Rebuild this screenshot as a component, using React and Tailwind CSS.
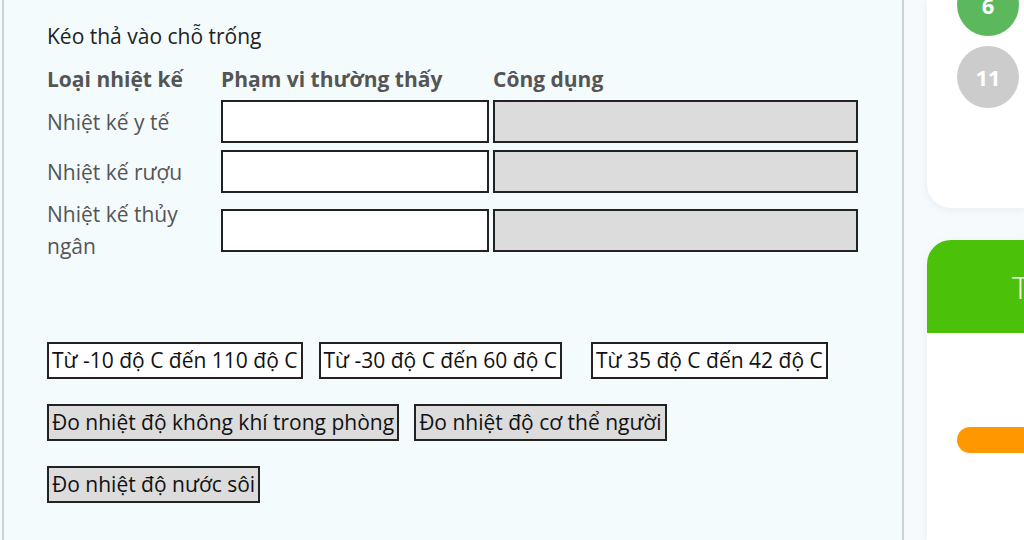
import React from "react";

const rows = [
  { label: "Nhiệt kế y tế", mt: "mt-[5px]" },
  { label: "Nhiệt kế rượu", mt: "mt-[7px]" },
  { label: "Nhiệt kế thủy ngân", mt: "mt-[5px]" },
];

const ranges = [
  { text: "Từ -10 độ C đến 110 độ C", cls: "" },
  { text: "Từ -30 độ C đến 60 độ C", cls: "ml-4" },
  { text: "Từ 35 độ C đến 42 độ C", cls: "ml-[29px]" },
];

const uses = [
  { text: "Đo nhiệt độ không khí trong phòng", cls: "" },
  { text: "Đo nhiệt độ cơ thể người", cls: "ml-[15px]" },
];

const Chip = ({ text, grey, className = "" }) => (
  <div
    className={`border-2 border-[#222] px-[3px] h-[37px] flex items-center text-[21px] text-[#111] whitespace-nowrap ${
      grey ? "bg-[#dcdcdc]" : "bg-white"
    } ${className}`}
  >
    {text}
  </div>
);

const App = () => {
  return (
    <div
      className="w-[1024px] h-[540px] overflow-hidden flex bg-[#f8fbfd] pl-[2px]"
      style={{ fontFamily: '"Open Sans", "Noto Sans", sans-serif' }}
    >
      {/* Main exercise panel */}
      <div className="w-[902px] shrink-0 h-full bg-[#f3fbfd] border-l-2 border-r-2 border-[#cbd3da] pl-[43px] pt-[20px]">
        <p className="text-[21px] leading-[32px] text-[#222]">Kéo thả vào chỗ trống</p>

        {/* Table */}
        <div className="grid grid-cols-[170px_268px_365px] gap-x-[4px] items-center mt-[11px]">
          <div className="text-[21px] leading-[32px] font-bold text-[#555] whitespace-nowrap">Loại nhiệt kế</div>
          <div className="text-[21px] leading-[32px] font-bold text-[#555]">Phạm vi thường thấy</div>
          <div className="text-[21px] leading-[32px] font-bold text-[#555]">Công dụng</div>

          {rows.map((row) => (
            <React.Fragment key={row.label}>
              <div className={`text-[21px] leading-[32px] text-[#555] ${row.mt}`}>
                {row.label}
              </div>
              <div className={`h-[43px] border-2 border-[#222] bg-white ${row.mt}`}></div>
              <div className={`h-[43px] border-2 border-[#222] bg-[#dcdcdc] ${row.mt}`}></div>
            </React.Fragment>
          ))}
        </div>

        {/* Draggable options */}
        <div className="mt-[80px] flex flex-col gap-y-[25px]">
          <div className="flex">
            {ranges.map((r) => (
              <Chip key={r.text} text={r.text} className={r.cls} />
            ))}
          </div>
          <div className="flex">
            {uses.map((u) => (
              <Chip key={u.text} text={u.text} grey className={u.cls} />
            ))}
          </div>
          <div className="flex">
            <Chip text="Đo nhiệt độ nước sôi" grey />
          </div>
        </div>
      </div>

      {/* Right sidebar */}
      <div className="flex-1 min-w-0 h-full bg-[#f6fafc] pl-[23px] flex flex-col">
        <div className="bg-white rounded-bl-[24px] shadow-[0_2px_10px_rgba(0,0,0,0.06)] h-[208px] pl-[30px] flex flex-col gap-[10px]">
          <div className="w-[62px] h-[62px] rounded-full bg-[#5cb85c] -mt-[26px] flex items-center justify-center text-white font-bold text-[22px]">
            6
          </div>
          <div className="w-[62px] h-[62px] rounded-full bg-[#cccccc] flex items-center justify-center text-white font-bold text-[22px]">
            11
          </div>
        </div>

        <div className="mt-[32px] bg-white rounded-tl-[24px] shadow-[0_2px_10px_rgba(0,0,0,0.06)] flex-1 overflow-hidden">
          <div className="bg-[#4cc10a] h-[93px] flex items-center pl-[85px] text-white text-[32px] font-light whitespace-nowrap overflow-hidden">
            Thời gian
          </div>
          <div className="pl-[30px] pt-[94px]">
            <div className="h-[26px] bg-[#ff9800] rounded-l-full"></div>
          </div>
        </div>
      </div>
    </div>
  );
};

export default App;
